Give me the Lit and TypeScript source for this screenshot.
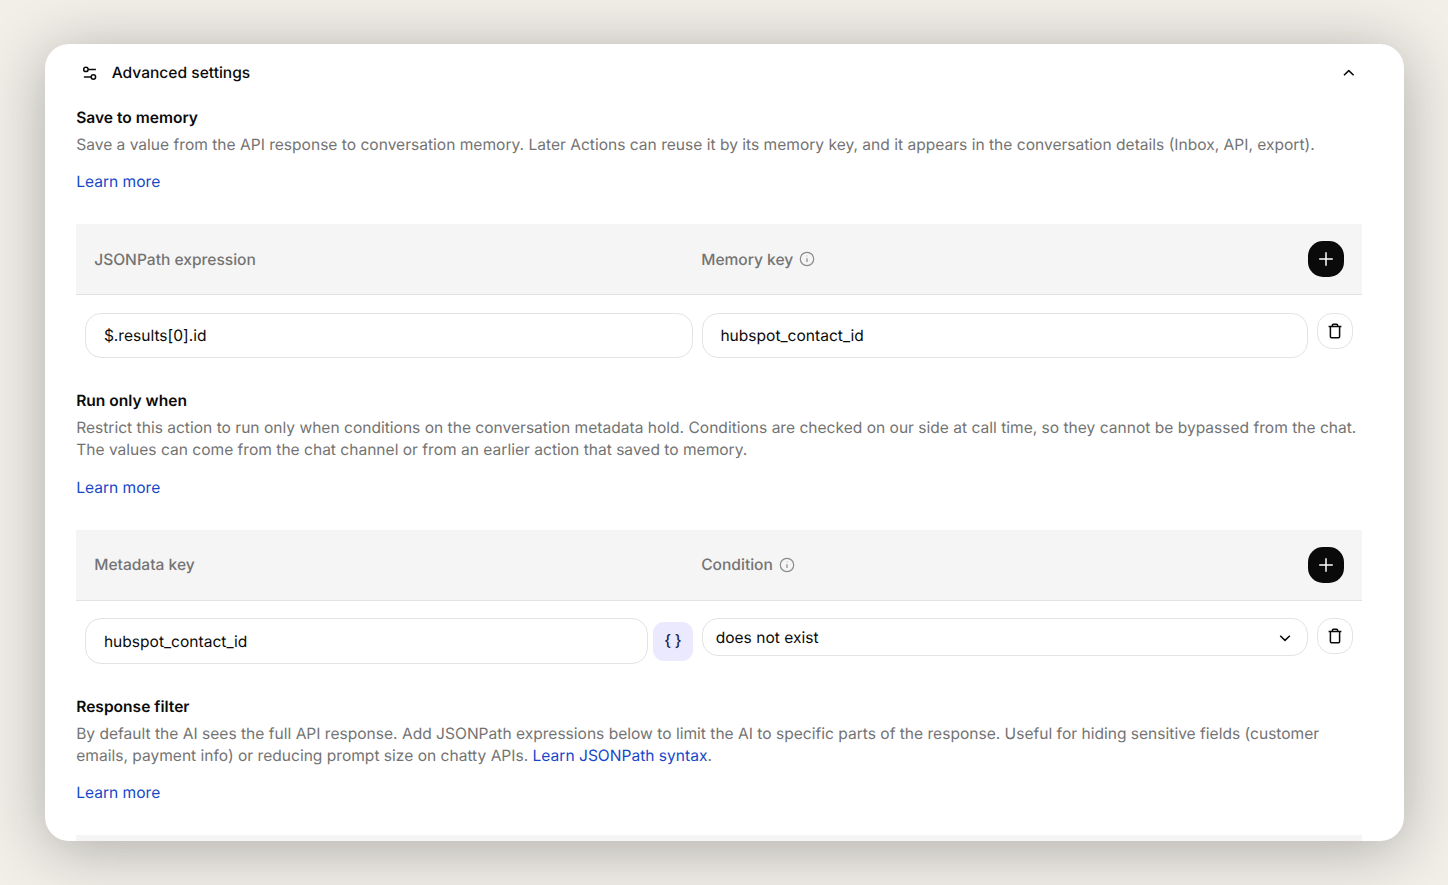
import { LitElement, html, css, svg, nothing } from "lit";
import { customElement, property } from "lit/decorators.js";

const paths: Record<string, unknown> = {
  sliders: svg`<circle cx="3.9" cy="4.4" r="2.2"/><path d="M6.2 4.4H13.9"/><circle cx="11.4" cy="12" r="2.2"/><path d="M1.9 12H9.2"/>`,
  up: svg`<path d="M3 10.3 7.8 5.6 12.6 10.3"/>`,
  down: svg`<path d="M3.2 5.7 8 10.4 12.8 5.7"/>`,
  plus: svg`<path d="M8 1.2V14.8M1.2 8H14.8"/>`,
  info: svg`<circle cx="8" cy="8" r="6.7"/><path d="M8 7.3V11"/><path d="M8 4.8V5.3"/>`,
  trash: svg`<path d="M1.6 3.6H14.4M3.4 3.6V13.6Q3.4 14.7 4.5 14.7H11.5Q12.6 14.7 12.6 13.6V3.6M5.3 3.4V2.4Q5.3 1.2 6.5 1.2H9.5Q10.7 1.2 10.7 2.4V3.4"/>`,
};

@customElement("ui-icon")
export class UiIcon extends LitElement {
  @property() name = "";
  @property() weight = "1.5";

  static styles = css`
    :host { display: inline-flex; width: 16px; height: 16px; flex: none; }
    svg { width: 100%; height: 100%; fill: none; stroke: currentColor; stroke-linejoin: round; }
  `;

  render() {
    return html`<svg viewBox="0 0 16 16" stroke-width=${this.weight}>${paths[this.name]}</svg>`;
  }
}

@customElement("app-root")
export class AppRoot extends LitElement {
  static styles = css`
    :host {
      display: block;
      box-sizing: border-box;
      width: 100%;
      height: 885px;
      padding: 43.5px 44px 44px 44.5px;
      background: #f2efe8;
      font-family: Inter, sans-serif;
      font-size: 15.57px;
      line-height: 22.3px;
      text-rendering: geometricPrecision;
      color: #0a0a0a;
      overflow: hidden;
    }
    * { box-sizing: border-box; }
    .card {
      height: 797.5px;
      border-radius: 24px;
      background: #fff;
      box-shadow: 0 8px 62px rgba(20, 24, 28, 0.31);
    }
    .clip { height: 100%; border-radius: 24px; overflow: hidden; padding: 0 42px 0 31.7px; }
    .top { display: flex; align-items: center; height: 58px; padding: 0 5.5px; font-weight: 500; }
    .top .title { flex: 1; margin-left: 14px; padding-top: 1.2px; }
    .section { height: 305.6px; }
    .section.short { height: 283.3px; }
    .heading { margin: 0; padding-top: 5.2px; font-size: 15.57px; font-weight: 600; line-height: 22.3px; }
    .desc { margin: 4.7px 0 0; color: #737373; white-space: nowrap; }
    a { color: #1447c8; text-decoration: none; }
    .more { display: block; width: max-content; margin-top: 15.1px; }
    .band {
      display: grid;
      grid-template-columns: 607px 1fr 36px;
      align-items: center;
      height: 71px;
      margin-top: 30.7px;
      padding: 0 18px;
      background: #f5f5f5;
      border-bottom: 1px solid #e2e2e2;
      color: #737373;
      font-weight: 500;
    }
    .band .text { padding-top: 1.8px; }
    .band .label { display: flex; align-items: center; gap: 6px; }
    .info { color: #8b8b8b; }
    .add {
      display: grid;
      place-items: center;
      height: 36px;
      border-radius: 15px;
      background: #0a0a0a;
      color: #fff;
    }
    .row { display: flex; align-items: flex-start; margin-top: 17.8px; padding: 0 9px; }
    .field, .select {
      display: flex;
      align-items: center;
      height: 45.5px;
      border: 1px solid #e3e3e3;
      border-radius: 16px;
      background: #fff;
      padding: 2px 17.7px 0;
    }
    .key { width: 607.5px; }
    .key.narrow { width: 563px; }
    .value { width: 606.5px; margin-left: 9px; }
    .select { height: 38px; padding: 0.6px 14px 0 13px; justify-content: space-between; }
    .braces {
      display: grid;
      place-items: center;
      width: 39.5px;
      height: 39.5px;
      margin: 3.3px 0 0 5px;
      border-radius: 11px;
      background: #ebe9fe;
      color: #1e1a4b;
      font-weight: 500;
      word-spacing: -0.5px;
    }
    .delete {
      display: grid;
      place-items: center;
      width: 36px;
      height: 36px;
      margin-left: 8.7px;
      border: 1px solid #e3e3e3;
      border-radius: 15px;
    }
  `;

  private band(left: string, right: string) {
    return html`<div class="band">
      <span class="text">${left}</span>
      <span class="label"><span class="text">${right}</span><ui-icon class="info" name="info" weight="1.2"></ui-icon></span>
      <span class="add"><ui-icon name="plus" weight="1.5"></ui-icon></span>
    </div>`;
  }

  private intro(title: string, lines: unknown) {
    return html`<h2 class="heading">${title}</h2>
      <p class="desc">${lines}</p>
      <a class="more">Learn more</a>`;
  }

  render() {
    return html`<div class="card"><div class="clip">
      <div class="top">
        <ui-icon name="sliders"></ui-icon>
        <span class="title">Advanced settings</span>
        <ui-icon name="up"></ui-icon>
      </div>
      <section class="section short">
        ${this.intro("Save to memory", "Save a value from the API response to conversation memory. Later Actions can reuse it by its memory key, and it appears in the conversation details (Inbox, API, export).")}
        ${this.band("JSONPath expression", "Memory key")}
        <div class="row">
          <div class="field key">$.results[0].id</div>
          <div class="field value">hubspot_contact_id</div>
          <span class="delete"><ui-icon name="trash"></ui-icon></span>
        </div>
      </section>
      <section class="section">
        ${this.intro("Run only when", html`Restrict this action to run only when conditions on the conversation metadata hold. Conditions are checked on our side at call time, so they cannot be bypassed from the chat.<br>The values can come from the chat channel or from an earlier action that saved to memory.`)}
        ${this.band("Metadata key", "Condition")}
        <div class="row">
          <div class="field key narrow">hubspot_contact_id</div>
          <span class="braces">{ }</span>
          <div class="select value">does not exist<ui-icon name="down"></ui-icon></div>
          <span class="delete"><ui-icon name="trash"></ui-icon></span>
        </div>
      </section>
      <section class="section">
        ${this.intro("Response filter", html`By default the AI sees the full API response. Add JSONPath expressions below to limit the AI to specific parts of the response. Useful for hiding sensitive fields (customer<br>emails, payment info) or reducing prompt size on chatty APIs. <a>Learn JSONPath syntax</a>.`)}
        <div class="band">${nothing}</div>
      </section>
    </div></div>`;
  }
}
